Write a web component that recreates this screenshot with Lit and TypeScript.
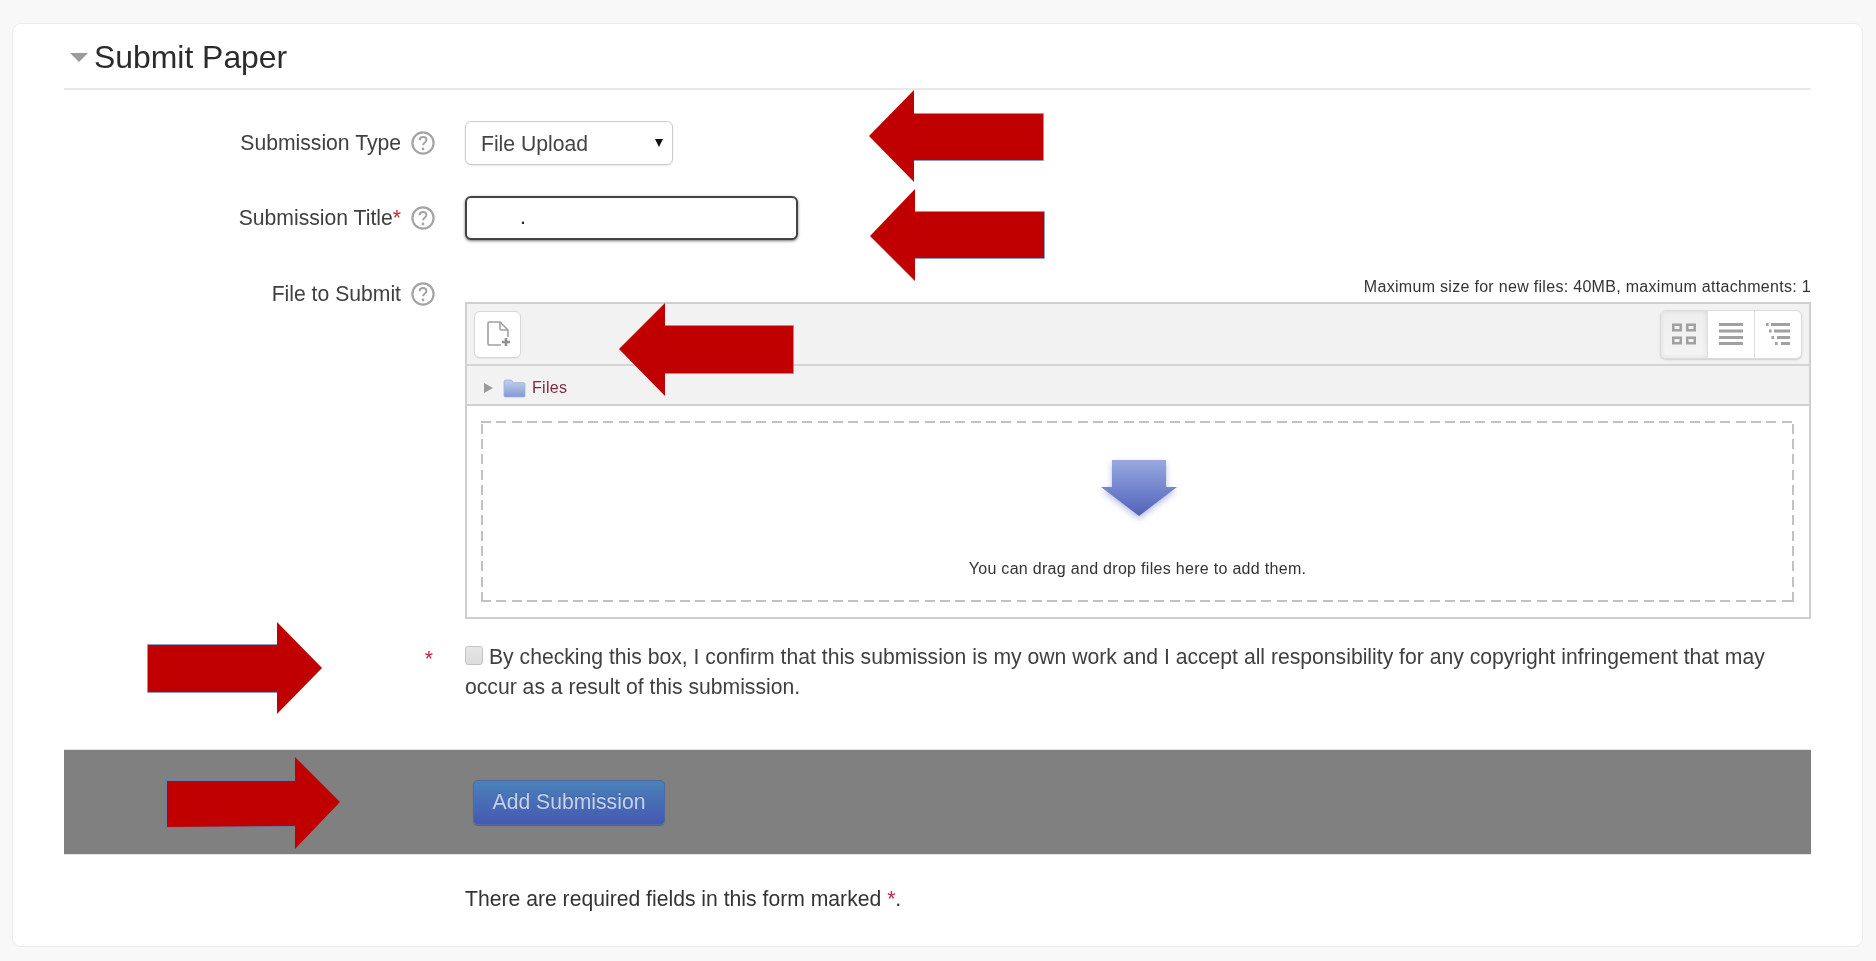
import { LitElement, html, css, svg } from "lit";
import { customElement } from "lit/decorators.js";

const helpIcon = html`<svg class="help" viewBox="0 0 24 24" width="24" height="24" aria-hidden="true">
  <circle cx="12" cy="12" r="10.6" fill="#fff" stroke="#a4a4a4" stroke-width="2.200"/>
  <path d="M8.700 9.300c0-2 1.400-3.200 3.400-3.200s3.300 1.100 3.300 2.900c0 1.400-.9 2.100-1.800 2.800-.9.6-1.500 1.200-1.500 2.500" fill="none" stroke="#a4a4a4" stroke-width="2"/>
  <circle cx="12" cy="18" r="1.400" fill="#a4a4a4"/>
</svg>`;

/* Red annotation arrows drawn over the form: [polygon points, tail edge points] */
const arrows: [string, string][] = [
  ["869,136 914,90 914,114 1043,114 1043,160 914,160 914,182", "914,114 1043,114 1043,160 914,160"],
  ["870,236 915,189 915,212 1044,212 1044,258 915,258 915,281", "915,212 1044,212 1044,258 915,258"],
  ["619,349 665,303 665,326 793,326 793,373 665,373 665,396", "665,326 793,326 793,373 665,373"],
  ["322,668 277,622 277,645 148,645 148,692 277,692 277,714", "277,645 148,645 148,692 277,692"],
  ["340,802 295,757 295,781 167,781 167,827 295,826 295,849", "295,781 167,781 167,827 295,826"],
];

@customElement("app-root")
export class AppRoot extends LitElement {
  static styles = css`
    :host {
      display: block;
      position: relative;
      height: 961px;
      box-sizing: border-box;
      padding: 23px 13px 14px 12px;
      background: #f8f8f8;
      font-family: "Liberation Sans", Arial, sans-serif;
      font-size: 21.170px;
      color: #333;
      overflow: hidden;
    }
    .card {
      box-sizing: border-box;
      height: 100%;
      padding: 0 51px;
      background: #fff;
      border: 1px solid #ececec;
      border-radius: 9px;
      filter: blur(0.55px);
    }
    .legend {
      display: flex;
      align-items: center;
      gap: 6px;
      box-sizing: border-box;
      height: 66px;
      padding-top: 2px;
      border-bottom: 2px solid #e8e8e8;
      font-size: 31.900px;
      color: #2b2b2b;
    }
    .legend-caret {
      width: 0;
      height: 0;
      margin: 0 0 0 6px;
      border-left: 9.500px solid transparent;
      border-right: 9.500px solid transparent;
      border-top: 9px solid #9c9c9c;
    }
    .row {
      display: grid;
      grid-template-columns: 401px 1fr;
    }
    .row-type { margin-top: 31px; }
    .row-title { margin-top: 31px; }
    .row-file { margin-top: 35px; }
    .row-check { margin-top: 23px; }
    .label {
      display: flex;
      align-items: center;
      justify-content: flex-end;
      gap: 10px;
      height: 44px;
      padding-right: 30px;
      color: #404040;
    }
    .req { color: #c9243f; }
    .row-file .label { height: 38px; }
    .help { flex: none; }
    .select-wrap {
      position: relative;
      width: 208px;
    }
    .select-wrap::after {
      content: "";
      position: absolute;
      right: 10px;
      top: 18px;
      border-left: 4.500px solid transparent;
      border-right: 4.500px solid transparent;
      border-top: 8px solid #111;
    }
    select {
      display: block;
      width: 100%;
      height: 44px;
      padding: 0 15px;
      appearance: none;
      background: #fff;
      border: 1px solid #ccc;
      border-radius: 6px;
      box-shadow: 0 1px 2px rgba(0, 0, 0, 0.1);
      font: inherit;
      color: #444;
    }
    .text-input {
      display: block;
      box-sizing: border-box;
      width: 333px;
      height: 44px;
      padding: 0 0 2px 53px;
      background: #fff;
      border: 2px solid #444;
      border-radius: 6px;
      box-shadow: 0 1px 3px rgba(0, 0, 0, 0.55);
      font: inherit;
      color: #222;
      outline: none;
    }
    .limits {
      height: 27px;
      font-size: 16px;
      letter-spacing: 0.3px;
      line-height: 24px;
      text-align: right;
      color: #333;
    }
    .picker {
      box-sizing: border-box;
      height: 317px;
      border: 2px solid #cfcfcf;
    }
    .toolbar {
      display: flex;
      align-items: center;
      justify-content: space-between;
      box-sizing: border-box;
      height: 62px;
      padding: 0 7px;
      background: #f2f2f2;
      border-bottom: 2px solid #d4d4d4;
    }
    .add-btn {
      display: flex;
      align-items: center;
      justify-content: center;
      box-sizing: border-box;
      width: 47px;
      height: 47px;
      background: #fff;
      border: 1px solid #d8d8d8;
      border-radius: 6px;
      box-shadow: 0 1px 1px rgba(0, 0, 0, 0.06);
    }
    .views {
      display: flex;
      height: 47px;
      background: #fff;
      border: 1px solid #ddd;
      border-radius: 6px;
      box-shadow: 0 1px 2px rgba(0, 0, 0, 0.15);
      overflow: hidden;
    }
    .view {
      display: flex;
      align-items: center;
      justify-content: center;
      width: 46px;
      border-left: 1px solid #ddd;
    }
    .view:first-child {
      border-left: 0;
      background: linear-gradient(#eeeeee, #f4f4f4);
      box-shadow: inset 0 0 5px rgba(0, 0, 0, 0.1);
    }
    .path {
      display: flex;
      align-items: center;
      box-sizing: border-box;
      height: 40px;
      padding: 6px 0 0 17px;
      background: #f2f2f2;
      border-bottom: 2px solid #d0d0d0;
      font-size: 16px;
      letter-spacing: 0.3px;
      color: #7d2a42;
    }
    .path-caret {
      width: 0;
      height: 0;
      margin-right: 10px;
      border-top: 5.500px solid transparent;
      border-bottom: 5.500px solid transparent;
      border-left: 9px solid #9a9a9a;
    }
    .folder { margin-right: 6px; }
    .drop-wrap {
      padding: 15px 15px 15px 14px;
    }
    .drop {
      display: flex;
      flex-direction: column;
      align-items: center;
      box-sizing: border-box;
      height: 181px;
      padding-top: 36px;
      background:
        repeating-linear-gradient(90deg, #c2c2c2 0 10px, transparent 10px 15.300px) top / 100% 2px no-repeat,
        repeating-linear-gradient(90deg, #c2c2c2 0 10px, transparent 10px 15.300px) bottom / 100% 2px no-repeat,
        repeating-linear-gradient(0deg, #c2c2c2 0 10px, transparent 10px 15.300px) left / 2px 100% no-repeat,
        repeating-linear-gradient(0deg, #c2c2c2 0 10px, transparent 10px 15.300px) right / 2px 100% no-repeat;
      font-size: 16px;
      letter-spacing: 0.3px;
      color: #333;
    }
    .drop-arrow { margin-left: 3px; }
    .drop-text { margin-top: 33px; line-height: 22px; }
    .check-req {
      display: flex;
      justify-content: flex-end;
      padding: 1px 32px 0 0;
      line-height: 31px;
      color: #c9243f;
    }
    .check-text {
      margin: 0;
      line-height: 30px;
      color: #404040;
    }
    .checkbox {
      appearance: none;
      display: inline-block;
      box-sizing: border-box;
      width: 18px;
      height: 19px;
      margin: 0 6px 0 0;
      vertical-align: -1px;
      background: linear-gradient(#e6e6e6, #dcdcdc);
      border: 1px solid #c4c4c4;
      border-radius: 3px;
    }
    .actions {
      display: grid;
      grid-template-columns: 409px auto;
      align-items: center;
      justify-content: start;
      box-sizing: border-box;
      height: 106px;
      margin-top: 47px;
      background: #808080;
      border-top: 1px solid #e6e6e6;
      border-bottom: 1px solid #e6e6e6;
    }
    .submit {
      grid-column: 2;
      width: 192px;
      height: 45px;
      padding: 0;
      background: linear-gradient(#4a82b8, #4658b2);
      border: 1px solid #4a6aa8;
      border-radius: 5px;
      box-shadow: 0 1px 1px rgba(40, 50, 90, 0.4);
      font: inherit;
      color: #c6d3e6;
      text-shadow: 0 -1px 0 rgba(0, 0, 0, 0.15);
    }
    .note {
      margin: 32px 0 0 401px;
      line-height: 24px;
      color: #333;
    }
    .overlay {
      position: absolute;
      inset: 0;
      pointer-events: none;
    }
  `;

  render() {
    return html`
      <div class="card">
        <div class="legend"><span class="legend-caret"></span>Submit Paper</div>

        <div class="row row-type">
          <div class="label">Submission Type ${helpIcon}</div>
          <div class="select-wrap"><select><option>File Upload</option></select></div>
        </div>

        <div class="row row-title">
          <div class="label"><span>Submission Title<span class="req">*</span></span> ${helpIcon}</div>
          <input class="text-input" type="text" value="." />
        </div>

        <div class="row row-file">
          <div class="label">File to Submit ${helpIcon}</div>
          <div>
            <div class="limits">Maximum size for new files: 40MB, maximum attachments: 1</div>
            <div class="picker">
              <div class="toolbar">
                <div class="add-btn">
                  <svg width="26" height="28" viewBox="0 0 26 28" fill="none" stroke="#a0a0a0" stroke-width="1.600">
                    <path d="M16 25H4.500a1.500 1.500 0 0 1-1.500-1.500V3.500A1.500 1.500 0 0 1 4.500 2H15l8 8v7"/>
                    <path d="M15 2v6.500a1.500 1.500 0 0 0 1.500 1.500H23"/>
                    <path d="M21 18v8M17 22h8" stroke="#8f8f8f" stroke-width="2.600"/>
                  </svg>
                </div>
                <div class="views">
                  <div class="view">
                    <svg width="26" height="22" viewBox="0 0 26 22" fill="none" stroke="#a0a0a0" stroke-width="2.500">
                      <rect x="2.250" y="1.750" width="7.500" height="5.500"/><rect x="16.250" y="1.750" width="7.500" height="5.500"/>
                      <rect x="2.250" y="14.750" width="7.500" height="5.500"/><rect x="16.250" y="14.750" width="7.500" height="5.500"/>
                    </svg>
                  </div>
                  <div class="view">
                    <svg width="26" height="22" viewBox="0 0 26 22" fill="none" stroke="#a0a0a0" stroke-width="2.800">
                      <path d="M1 1.500h24M1 8h24M1 14.500h24M1 20.500h24"/>
                    </svg>
                  </div>
                  <div class="view">
                    <svg width="26" height="22" viewBox="0 0 26 22" fill="none" stroke="#a0a0a0" stroke-width="2.800">
                      <path d="M1 1.500h2.600M6 1.500h19M4 8h2.600M9 8h16M6.500 14.500h2.600M12 14.500h13M10 20.500h2.600M16 20.500h9"/>
                    </svg>
                  </div>
                </div>
              </div>
              <div class="path">
                <span class="path-caret"></span>
                <svg class="folder" width="23" height="19" viewBox="0 0 22 18" preserveAspectRatio="none">
                  <defs>
                    <linearGradient id="fld" x1="0" y1="0" x2="0" y2="1">
                      <stop offset="0" stop-color="#c3d0ee"/><stop offset="1" stop-color="#8299d4"/>
                    </linearGradient>
                  </defs>
                  <path d="M1 2.500C1 1.500 1.500 1 2.500 1H8l2 2.500h10c.6 0 1 .4 1 1V16c0 .6-.4 1-1 1H2c-.6 0-1-.4-1-1Z" fill="url(#fld)" stroke="#9cb0dc" stroke-width=".8"/>
                </svg>
                Files
              </div>
              <div class="drop-wrap">
                <div class="drop">
                  <svg class="drop-arrow" width="84" height="68" viewBox="0 0 84 68">
                    <defs>
                      <linearGradient id="drp" x1="0" y1="0" x2="0" y2="1">
                        <stop offset="0" stop-color="#98a9e0"/><stop offset="1" stop-color="#5062ba"/>
                      </linearGradient>
                      <filter id="shd" x="-20%" y="-20%" width="140%" height="150%">
                        <feDropShadow dx="0" dy="3" stdDeviation="3" flood-color="#5a6cc0" flood-opacity=".45"/>
                      </filter>
                    </defs>
                    <path d="M15 3h54v27h11L42 59 4 30h11Z" fill="url(#drp)" filter="url(#shd)"/>
                  </svg>
                  <div class="drop-text">You can drag and drop files here to add them.</div>
                </div>
              </div>
            </div>
          </div>
        </div>

        <div class="row row-check">
          <div class="check-req">*</div>
          <p class="check-text"><input class="checkbox" type="checkbox" />By checking this box, I confirm that this submission is my own work and I accept all responsibility for any copyright infringement that may occur as a result of this submission.</p>
        </div>

        <div class="actions"><button class="submit">Add Submission</button></div>

        <p class="note">There are required fields in this form marked <span class="req">*</span>.</p>
      </div>

      <svg class="overlay" width="1876" height="961" viewBox="0 0 1876 961">
        ${arrows.map(
          ([shape, tail]) => svg`
            <polyline points=${tail} fill="none" stroke="#5f7fb8" stroke-width="1.500"/>
            <polygon points=${shape} fill="#c00000"/>`
        )}
      </svg>
    `;
  }
}
